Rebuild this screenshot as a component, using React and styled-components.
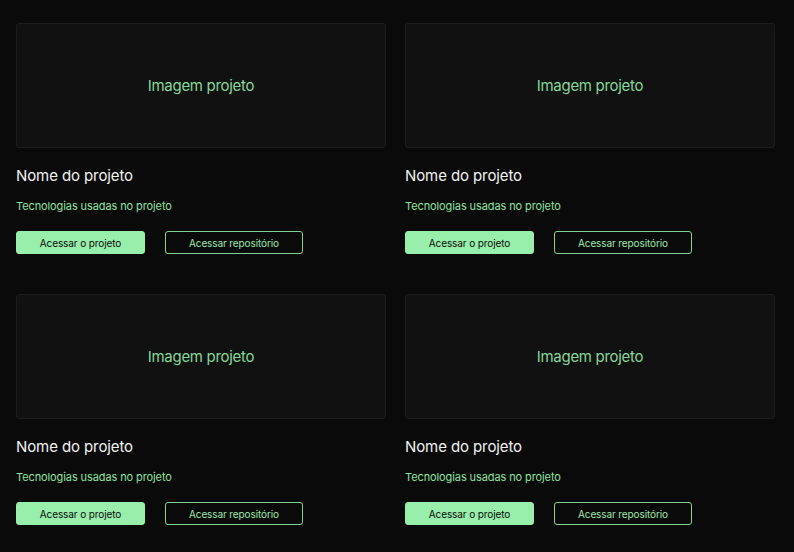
import React from "react";
import styled, { createGlobalStyle } from "styled-components";

const Global = createGlobalStyle`
  html, body { margin: 0; padding: 0; background: #0a0a0a; }
  body { font-family: Inter, "Noto Sans", sans-serif; }
`;

const Grid = styled.main`
  display: grid;
  grid-template-columns: 370px 370px;
  column-gap: 19px;
  row-gap: 40px;
  padding: 23px 16px 0 16px;
`;

const Card = styled.article`
  display: flex;
  flex-direction: column;
`;

const ImageBox = styled.div`
  height: 125px;
  box-sizing: border-box;
  background: #111111;
  border: 1px solid #1c1c1c;
  border-radius: 3px;
  display: flex;
  align-items: center;
  justify-content: center;
  color: #86d89a;
  font-size: 15px;
  letter-spacing: -0.3px;
`;

const Title = styled.h3`
  margin: 19px 0 0 0;
  font-size: 15px;
  font-weight: 400;
  line-height: 18px;
  color: #f2f2f2;
  letter-spacing: -0.1px;
`;

const Tech = styled.p`
  margin: 14px 0 0 0;
  font-size: 11px;
  line-height: 14px;
  color: #8ee3a2;
  letter-spacing: -0.1px;
`;

const Actions = styled.div`
  display: flex;
  gap: 20px;
  margin-top: 18px;
`;

const Button = styled.button`
  box-sizing: border-box;
  height: 23px;
  width: ${(p) => (p.$outline ? "138px" : "129px")};
  border-radius: 3px;
  font-family: Inter, "Noto Sans", sans-serif;
  font-size: 10px;
  font-weight: 400;
  letter-spacing: -0.1px;
  padding: 0;
  cursor: pointer;
  background: ${(p) => (p.$outline ? "transparent" : "#98eeab")};
  color: ${(p) => (p.$outline ? "#9de8ae" : "#0a0a0a")};
  border: 1.5px solid ${(p) => (p.$outline ? "#7fd594" : "#98eeab")};
`;

const projects = [1, 2, 3, 4];

export default function App() {
  return (
    <>
      <Global />
      <Grid>
        {projects.map((i) => (
          <Card key={i}>
            <ImageBox>Imagem projeto</ImageBox>
            <Title>Nome do projeto</Title>
            <Tech>Tecnologias usadas no projeto</Tech>
            <Actions>
              <Button>Acessar o projeto</Button>
              <Button $outline>Acessar repositório</Button>
            </Actions>
          </Card>
        ))}
      </Grid>
    </>
  );
}
